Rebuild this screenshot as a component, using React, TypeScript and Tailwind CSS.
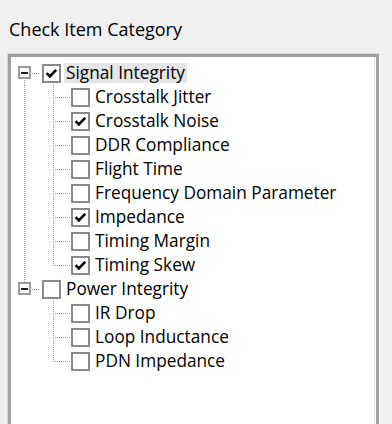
import React from 'react';

type Item = { label: string; checked: boolean };
type Group = { label: string; checked: boolean; selected?: boolean; children: Item[] };

const groups: Group[] = [
  {
    label: 'Signal Integrity',
    checked: true,
    selected: true,
    children: [
      { label: 'Crosstalk Jitter', checked: false },
      { label: 'Crosstalk Noise', checked: true },
      { label: 'DDR Compliance', checked: false },
      { label: 'Flight Time', checked: false },
      { label: 'Frequency Domain Parameter', checked: false },
      { label: 'Impedance', checked: true },
      { label: 'Timing Margin', checked: false },
      { label: 'Timing Skew', checked: true },
    ],
  },
  {
    label: 'Power Integrity',
    checked: false,
    children: [
      { label: 'IR Drop', checked: false },
      { label: 'Loop Inductance', checked: false },
      { label: 'PDN Impedance', checked: false },
    ],
  },
];

const dot = { stroke: '#a0a0a0', strokeWidth: 1, strokeDasharray: '1 1', shapeRendering: 'crispEdges' as const };

function CheckBox({ checked }: { checked: boolean }) {
  return (
    <div className="flex h-[19px] w-[19px] shrink-0 items-center justify-center border-2 border-[#8a8a8a] bg-white">
      {checked && (
        <svg width="15" height="15" viewBox="0 0 15 15">
          <path d="M2.6 7.2 L5.8 10.4 L12.2 3.8" fill="none" stroke="#000" strokeWidth="2.6" />
        </svg>
      )}
    </div>
  );
}

function RootRow({ group, first, last }: { group: Group; first: boolean; last: boolean }) {
  return (
    <div className="flex h-[24px] items-center">
      <svg width="31" height="24" className="shrink-0">
        {!first && <line x1="13.5" y1="0" x2="13.5" y2="5" {...dot} />}
        {!last && <line x1="13.5" y1="19" x2="13.5" y2="24" {...dot} />}
        <rect x="8" y="6" width="11" height="11" fill="#fff" stroke="#9a9a9a" strokeWidth="2" shapeRendering="crispEdges" />
        <rect x="10" y="11" width="7" height="2" fill="#222" shapeRendering="crispEdges" />
        <line x1="21" y1="12.5" x2="28" y2="12.5" {...dot} />
      </svg>
      <CheckBox checked={group.checked} />
      <span
        className={`ml-[3px] px-[2px] leading-[20px] whitespace-nowrap ${group.selected ? 'bg-[#e6e6e6]' : ''}`}
      >
        {group.label}
      </span>
    </div>
  );
}

function ChildRow({ item, last, parentLast }: { item: Item; last: boolean; parentLast: boolean }) {
  return (
    <div className="flex h-[24px] items-center">
      <svg width="60" height="24" className="shrink-0">
        {!parentLast && <line x1="13.5" y1="0" x2="13.5" y2="24" {...dot} />}
        <line x1="42.5" y1="0" x2="42.5" y2={last ? 13 : 24} {...dot} />
        <line x1="44" y1="12.5" x2="59" y2="12.5" {...dot} />
      </svg>
      <CheckBox checked={item.checked} />
      <span className="ml-[3px] px-[2px] leading-[20px] whitespace-nowrap">{item.label}</span>
    </div>
  );
}

export default function App() {
  return (
    <div className="h-[424px] w-[392px] overflow-hidden bg-[#f0f0f0] font-['Open_Sans','Noto_Sans',sans-serif] text-[17.25px] text-black">
      <div className="pl-[9px] pt-[17px] text-[18px] leading-[24px]">Check Item Category</div>

      <div className="ml-[7px] mt-[12px] h-[380px] w-[373px] border-l border-r border-t border-l-[#d6d6d6] border-r-[#f8f8f8] border-t-[#d6d6d6]">
        <div className="h-full border-l-[3px] border-r-[3px] border-t-[3px] border-[#a0a0a0]">
          <div className="h-full bg-white pr-[1px]">
            <div className="h-full border-r border-[#e3e3e3] pt-[4px]">
              {groups.map((g, gi) => {
                const last = gi === groups.length - 1;
                return (
                  <div key={g.label}>
                    <RootRow group={g} first={gi === 0} last={last} />
                    {g.children.map((c, ci) => (
                      <ChildRow key={c.label} item={c} last={ci === g.children.length - 1} parentLast={last} />
                    ))}
                  </div>
                );
              })}
            </div>
          </div>
        </div>
      </div>
    </div>
  );
}
